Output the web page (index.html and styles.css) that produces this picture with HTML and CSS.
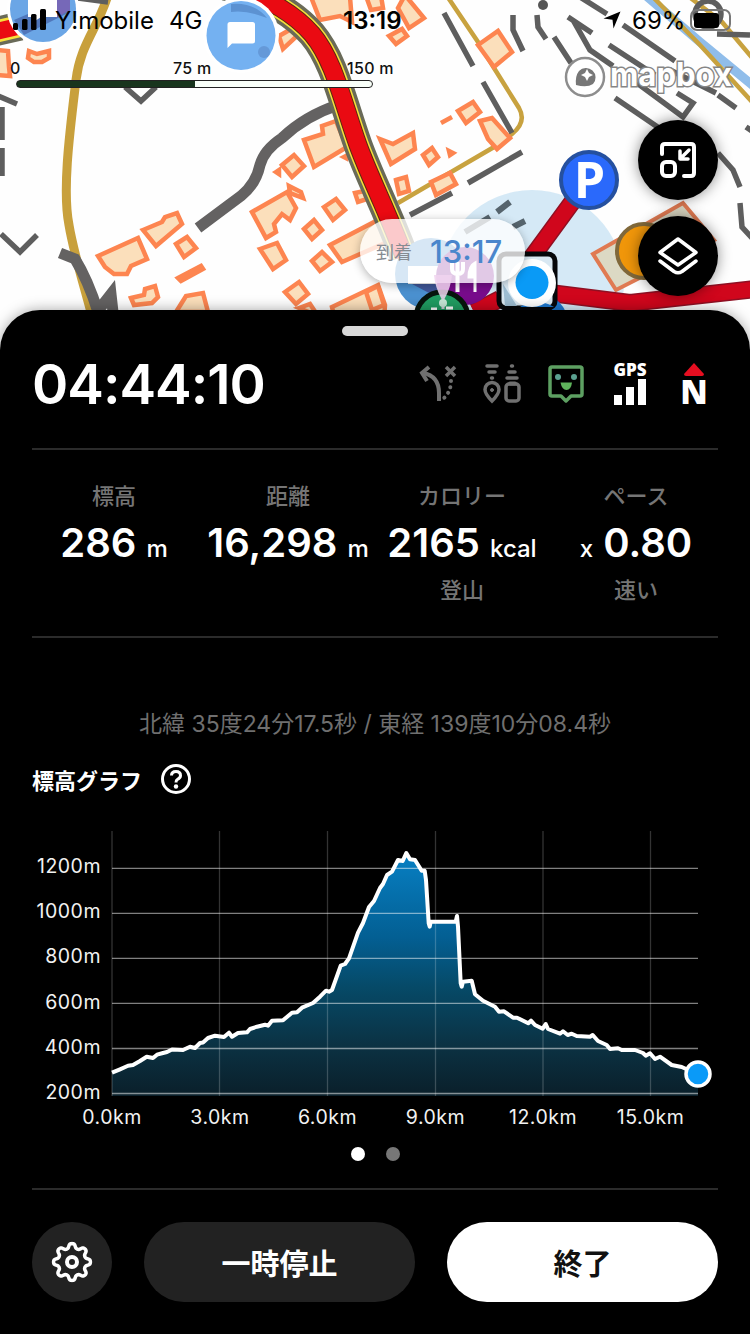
FILE: index.html
```html
<!DOCTYPE html>
<html lang="ja">
<head>
  <meta charset="UTF-8">
  <title>活動記録</title>
  <link rel="stylesheet" href="styles.css">
</head>
<body>
  <div class="screen">

    <!-- 地図 -->
    <section class="map">
      <svg class="map-canvas" viewBox="0 0 750 350" width="750" height="350">
        <!-- 水路と細い道 -->
        <path class="river" d="M644 -6 L700 42 L756 88"/>
        <g class="lane">
          <path d="M652 -4 L700 45 L754 104"/>
          <path d="M688 -4 L722 22 L754 60"/>
          <path d="M447 -4 L478 42 L494 68 L519 108 Q527 122 512 134 L494 147 L398 203"/>
        </g>
        <path class="road-olive" d="M108 -5 C98 28 80 45 76 80 C70 130 62 190 69 225 C74 255 84 285 93 320"/>
        <g class="road-gray">
          <path d="M338 105 Q305 116 282 138 Q264 150 260 165 Q256 184 241 196 L198 228"/>
          <path d="M60 253 L75 259 Q88 280 98 312 M97 312 L111 294 L113 312"/>
        </g>

        <!-- 擁壁・崖線 -->
        <g class="wall">
          <path d="M1 234 L20 252 L37 235"/>
          <path d="M125 87 L141 101 L156 87"/>
          <path d="M-2 96 L17 104"/>
          <path d="M2 107 V140 M2 148 V176"/>
          <path d="M78 -2 L108 2"/>
          <path d="M444 13 L473 66 M483 82 L512 133"/>
          <path d="M513 15 L513 30 L523 51 M537 15 L538 27 L546 39"/>
          <path d="M554 37 L571 63 M568 17 L592 33 M573 20 L590 50 L613 66"/>
          <path d="M580 -3 L607 14 M623 25 L675 61 M609 45 L655 75 M670 70 L716 93"/>
          <path d="M615 98 L662 130 M637 83 L683 117 L693 103 L677 93 M718 95 L736 108"/>
          <path d="M717 34 L750 35 M746 127 L752 131"/>
          <path d="M718 153 L733 170 L740 187 M740 203 L742 227 L752 238"/>
          <path d="M468 183 L522 152 M410 215 L452 193"/>
          <circle cx="708" cy="14" r="13"/>
        </g>
        <circle cx="543" cy="5" r="5" fill="#555"/>

        <!-- 建物 -->
        <g class="building">
          <path d="M405 -5 L424 18 L409 28 L398 8 Z"/>
          <path d="M389 36 L402 29 L407 36 L396 44 Z"/>
          <path d="M478 45 L498 31 L512 52 L494 67 Z"/>
          <path d="M311 -3 L320 20 L340 16 L352 22 L350 -3 Z"/>
          <path d="M366 -4 L371 10 L383 8 L381 -4 Z"/>
          <path d="M279 36 L293 28 L298 35 L283 49 Z"/>
          <path d="M29 51 L37 54 L49 51 L49 58 L42 62 L34 62 L28 58 Z"/>
          <path d="M-4 50 L8 51 L9 67 L10 76 L-4 75 Z"/>
          <path d="M304 140 L323 134 L322 126 L336 121 L347 147 L314 167 Z"/>
          <path d="M282 165 L294 155 L304 166 L292 177 Z"/>
          <path d="M252 212 L287 192 L296 208 L290 220 L282 214 L274 224 L276 232 L266 238 Z"/>
          <path d="M289 186 L301 192 L303 198 L290 193 Z"/>
          <path d="M324 207 L336 199 L345 210 L333 220 Z"/>
          <path d="M304 229 L314 220 L322 230 L312 239 Z"/>
          <path d="M355 193 L364 191 L367 199 L358 202 Z"/>
          <path d="M260 249 L277 243 L286 260 L273 269 Z"/>
          <path d="M330 245 L378 220 L392 240 L342 262 Z"/>
          <path d="M312 261 L322 252 L332 262 L320 271 Z"/>
          <path d="M285 292 L299 282 L308 294 L296 304 Z"/>
          <path d="M332 307 L378 285 L385 305 L384 320 L335 320 Z"/>
          <path d="M98 256 L138 238 L147 259 L131 266 L127 274 L114 274 L105 267 Z"/>
          <path d="M143 230 L162 222 L165 217 L177 213 L182 224 L156 246 Z"/>
          <path d="M176 244 L187 237 L196 248 L184 257 Z"/>
          <path d="M178 278 L201 266 L203 269 L181 281 Z"/>
          <path d="M131 298 L144 295 L145 289 L155 286 L158 297 L152 303 L134 305 Z"/>
          <path d="M176 312 L186 296 L203 293 L208 312 Z"/>
          <path d="M299 308 L310 304 L318 316 Z"/>
          <path d="M380 139 L393 144 L413 133 L415 149 L391 164 Z"/>
          <path d="M423 155 L432 148 L438 157 L429 165 Z"/>
          <path d="M458 111 L473 102 L480 112 L466 123 Z"/>
          <path d="M480 121 L492 118 L510 138 L497 149 L488 139 Z"/>
          <path d="M431 182 L450 173 L456 184 L436 195 Z"/>
          <path d="M396 180 L406 177 L409 191 L399 194 Z"/>
          <path d="M441 123 L452 117"/>
          <path d="M449 151 L453 153 L450 155 Z M276 172 L279 170 L279 174 Z M344 157 L346 156 L346 158 Z"/>
          <path d="M366 292 L378 286 L384 305 L372 310 Z"/>
        </g>

        <!-- 国道 -->
        <g class="highway">
          <path class="casing" d="M-6 32 L20 26 M225 -14 C270 -4 298 18 312 34 C334 60 342 100 358 145 C370 178 386 208 404 256"/>
          <path class="edge" d="M-6 32 L20 26 M225 -14 C270 -4 298 18 312 34 C334 60 342 100 358 145 C370 178 386 208 404 256"/>
          <path class="line" d="M225 -14 C270 -4 298 18 312 34 C334 60 342 100 358 145 C370 178 386 208 404 256"/>
          <path class="fill" d="M-6 32 L20 26 M225 -14 C270 -4 298 18 312 34 C334 60 342 100 358 145 C370 178 386 208 404 256"/>
        </g>

        <!-- 現在地の精度円 -->
        <circle cx="532" cy="282" r="92" fill="#c3dff2" opacity=".7"/>
        <path d="M497 212 L510 202 M465 232 L490 217 M513 227 L525 221" stroke="#56646d" stroke-width="6"/>

        <path d="M593 254 L683 203 L714 240 L616 290 Z" fill="#dcd9c4" stroke="#e07a52" stroke-width="4"/>

        <!-- ルート -->
        <g class="route">
          <path class="route-edge" d="M584 186 L524 268 M550 293 L630 303 L756 289 M474 312 L500 299"/>
          <path class="route-line" d="M584 186 L524 268 M550 293 L630 303 L756 289 M474 312 L500 299"/>
        </g>

        <!-- マーカー -->
        <circle cx="644" cy="251" r="27" fill="#f0960a" stroke="#80683a" stroke-width="4"/>
        <circle cx="589" cy="180" r="28" fill="#2a69fb" stroke="#25509f" stroke-width="4"/>
        <text class="parking" x="589.5" y="198" text-anchor="middle">P</text>

        <circle cx="43" cy="9" r="36" fill="#fff"/>
        <circle cx="43" cy="9" r="33" fill="#6ba6e6"/>
        <path d="M14 20 L70 -4 V12 L24 35 Z" fill="#5077bb"/>
        <path d="M56 -5 H70 V10 L56 18 Z" fill="#7668b8"/>
        <path d="M28 -4 H57 V17 H41 L32 23 V17 H28 Z" fill="#fff"/>

        <circle cx="241" cy="35" r="38" fill="#fff"/>
        <circle cx="241" cy="35.500" r="34.500" fill="#74b1f1"/>
        <path d="M231 4 Q254 2 267 18 Q248 10 231 12 Z" fill="#5c92d2"/>
        <circle cx="264" cy="52" r="6" fill="#6599d8"/>
        <path d="M229 22 H252.500 Q255 22 255 24.500 V41 Q255 43.500 252.500 43.500 H232 L227.500 48 V24.500 Q227.500 22 230 22 Z" fill="#fff"/>

        <circle cx="431" cy="274" r="36" fill="#4b91d0"/>
        <path d="M408 266 H440 V284 H408 Z" fill="#fff"/>
        <path d="M412 284 H450 V304 Z" fill="#405799"/>
        <circle cx="465" cy="276" r="29" fill="#780c8c"/>
        <path d="M452 262 V269 Q452 274 458 274 Q463 274 463 269 V262 M457.500 262 V292" fill="none" stroke="#fff" stroke-width="4"/>
        <path d="M475 292 V263 Q469 266 469 277 H475" fill="#fff" stroke="#fff" stroke-width="3"/>

        <circle cx="535" cy="326" r="34" fill="#1e78cf"/>
        <rect x="499" y="254" width="56" height="54" rx="7" fill="#d9e8f2" stroke="#05070a" stroke-width="5"/>
        <path d="M503 284 L517 306 H505 Z" fill="#9dbdd2"/>
        <path d="M520 307 Q535 296 554 307 Z" fill="#1e78cf"/>
        <circle cx="532" cy="283" r="24" fill="#fff"/>
        <circle cx="532" cy="282.500" r="16.500" fill="#0a9af6"/>

        <circle cx="442" cy="318" r="26" fill="#209c61" stroke="#07150d" stroke-width="5"/>
        <path d="M431 309 H437 M446 308 H453" stroke="#fff" stroke-width="3"/>
      </svg>

      <div class="status-bar">
        <svg width="34" height="22" viewBox="0 0 34 22">
          <rect x="0" y="14" width="5" height="7" rx="1.500"/>
          <rect x="9" y="10" width="5.500" height="11" rx="1.500"/>
          <rect x="18" y="5" width="5.500" height="16" rx="1.500"/>
          <rect x="27" y="0" width="6" height="21" rx="1.500"/>
        </svg>
        <span class="carrier">Y!mobile</span>
        <span class="network">4G</span>
        <span class="clock">13:19</span>
        <svg class="locate" width="18" height="18" viewBox="0 0 18 18">
          <path d="M17.500 0.500 L10.500 17.500 L9.500 8.800 L0.500 7.500 Z"/>
        </svg>
        <span class="percent">69%</span>
        <svg width="43" height="22" viewBox="0 0 43 22">
          <rect x="1" y="1" width="39" height="20" rx="6" fill="none" stroke="#777" stroke-width="2"/>
          <rect x="4" y="4" width="25" height="15" rx="3"/>
        </svg>
      </div>

      <div class="scale">
        <span class="scale-0">0</span>
        <span class="scale-75">75 m</span>
        <span class="scale-150">150 m</span>
        <div class="scale-bar"></div>
      </div>

      <svg class="mapbox" width="176" height="48" viewBox="0 0 176 48">
        <circle cx="23" cy="25" r="19" fill="#fff" fill-opacity=".9" stroke="#8d8d8d" stroke-width="2.500"/>
        <path d="M14 33 Q13 24 17 19 A9.500 9.500 0 0 1 31 32 Q25 36 14 33 Z" fill="#777"/>
        <path d="M25 17 L27 21 L31 23 L27 25 L25 29 L23 25 L19 23 L23 21 Z" fill="#fff"/>
        <text x="48" y="34" textLength="122" lengthAdjust="spacingAndGlyphs">mapbox</text>
      </svg>

      <div class="arrival">
        <span class="arrival-label">到着</span>
        <span class="arrival-time">13:17</span>
        <svg class="arrival-pin" width="18" height="40" viewBox="0 0 18 40">
          <path d="M0 0 Q1 12 7.500 24 V34 H10.500 V24 Q17 12 18 0 Z" fill="#f0d3ee" opacity=".85"/>
          <circle cx="9" cy="28" r="4" fill="#c5e6d6"/>
        </svg>
      </div>

      <div class="map-buttons">
        <button class="round-btn">
          <svg width="40" height="40" viewBox="0 0 40 40" fill="none" stroke="#fff" stroke-width="4" stroke-linecap="round" stroke-linejoin="round">
            <path d="M4 14 V7 Q4 4 7 4 H33 Q36 4 36 7 V33 Q36 36 33 36 H26"/>
            <rect x="4" y="22" width="13" height="14" rx="4"/>
            <path d="M31 10 L24 17 M22 11 V19 H30" stroke-width="3.500"/>
          </svg>
        </button>
        <button class="round-btn">
          <svg width="44" height="40" viewBox="0 0 44 40" fill="none" stroke="#fff" stroke-width="3.500" stroke-linecap="round" stroke-linejoin="round">
            <path d="M22 3 L40 16.500 L22 29 L4 16.500 Z"/>
            <path d="M4 25 L18 35.500 Q22 38 26 35.500 L40 25"/>
          </svg>
        </button>
      </div>
    </section>

    <!-- 活動パネル -->
    <section class="sheet">
      <div class="handle"></div>

      <header class="sheet-header">
        <span class="timer">04:44:10</span>
        <div class="indicators">
          <svg width="40" height="40" viewBox="0 0 40 40" fill="none" stroke="#707070" stroke-width="4">
            <path d="M21 37 V29 Q21 12 5 9"/>
            <path d="M11 3 L4 9 L9 17"/>
            <path d="M28 3 L37 12 M37 3 L28 12" stroke-width="3.500"/>
            <path d="M33 17 Q33 28 25 35" stroke-dasharray="0.1 6" stroke-linecap="round"/>
          </svg>
          <svg width="40" height="40" viewBox="0 0 40 40" fill="none" stroke="#707070" stroke-width="3.500" stroke-linecap="round">
            <path d="M5 2 H15 M7 8 H13 M9.500 14 H10.500 M29.500 2 H30.500 M27 8 H33 M25 14 H35"/>
            <path d="M10 37 Q3 30 3 25.500 A7 7 0 0 1 17 25.500 Q17 30 10 37 Z"/>
            <circle cx="10" cy="26" r="1.500" fill="#707070" stroke-width="1"/>
            <rect x="24" y="20" width="13" height="17" rx="3"/>
            <path d="M28 19.500 H33" stroke-width="4"/>
          </svg>
          <svg width="40" height="40" viewBox="0 0 40 40" fill="none" stroke="#5da062" stroke-width="3.500" stroke-linejoin="round">
            <path d="M6 3 H34 Q36 3 36 5 V30 Q36 32 34 32 H25 L20 37 L15 32 H6 Q4 32 4 30 V5 Q4 3 6 3 Z"/>
            <circle cx="12" cy="13" r="3" fill="#5aa090" stroke="none"/>
            <circle cx="28" cy="13" r="3" fill="#5aa090" stroke="none"/>
            <path d="M15 18.500 H26 Q25 26 20.500 26 Q16 26 14.500 18.500 Z" fill="#5fb45c" stroke="none"/>
          </svg>
          <div class="gps">
            <span>GPS</span>
            <svg width="32" height="26" viewBox="0 0 32 26" fill="#fff">
              <rect x="0" y="16" width="8" height="10"/>
              <rect x="12" y="8" width="8" height="18"/>
              <rect x="24" y="0" width="8" height="26"/>
            </svg>
          </div>
          <div class="north">
            <svg width="20" height="13" viewBox="0 0 20 13"><path d="M10 0 L20 11 Q20 13 18 13 H2 Q0 13 0 11 Z" fill="#e60e20"/></svg>
            <span>N</span>
          </div>
        </div>
      </header>

      <div class="stats">
        <div class="stat">
          <span class="stat-label">標高</span>
          <span class="stat-value">286 <small>m</small></span>
        </div>
        <div class="stat">
          <span class="stat-label">距離</span>
          <span class="stat-value">16,298 <small>m</small></span>
        </div>
        <div class="stat">
          <span class="stat-label">カロリー</span>
          <span class="stat-value">2165 <small>kcal</small></span>
          <span class="stat-label">登山</span>
        </div>
        <div class="stat">
          <span class="stat-label">ペース</span>
          <span class="stat-value"><small>x</small> 0.80</span>
          <span class="stat-label">速い</span>
        </div>
      </div>

      <p class="coords">北緯 35度24分17.5秒 / 東経 139度10分08.4秒</p>

      <div class="chart-title">
        <h2>標高グラフ</h2>
        <svg width="32" height="32" viewBox="0 0 32 32" fill="none" stroke="#fff" stroke-width="3">
          <circle cx="16" cy="16" r="13.500"/>
          <path d="M11.500 12.500 Q11.500 8.500 16 8.500 Q20.500 8.500 20.500 12.500 Q20.500 15 17.500 16.300 Q16 17 16 19.500"/>
          <circle cx="16" cy="23.500" r="2.200" fill="#fff" stroke="none"/>
        </svg>
      </div>

      <svg class="chart" viewBox="32 800 686 340" width="686" height="340">
        <defs>
          <linearGradient id="elevation" x1="0" y1="852" x2="0" y2="1096" gradientUnits="userSpaceOnUse">
            <stop offset="0" stop-color="#0780c4"/>
            <stop offset=".35" stop-color="#035f93"/>
            <stop offset=".55" stop-color="#064a68"/>
            <stop offset=".8" stop-color="#0b3142"/>
            <stop offset="1" stop-color="#0a1f2a"/>
          </linearGradient>
        </defs>
        <path id="area" fill="url(#elevation)"/>
        <g class="grid-v">
          <path d="M112 831 V1096 M219.500 831 V1096 M327.500 831 V1096 M435.500 831 V1096 M543 831 V1096 M650.500 831 V1096"/>
        </g>
        <g class="grid-h">
          <path d="M112 868.300 H698 M112 913.300 H698 M112 958.300 H698 M112 1003.300 H698 M112 1048.500 H698 M112 1093.500 H698"/>
        </g>
        <path id="line" class="elevation-line"/>
        <circle cx="698" cy="1074" r="12" fill="#0a9af8" stroke="#fff" stroke-width="3.500"/>
        <g class="axis-y">
          <text x="101" y="873">1200m</text>
          <text x="101" y="918">1000m</text>
          <text x="101" y="963">800m</text>
          <text x="101" y="1008.500">600m</text>
          <text x="101" y="1054">400m</text>
          <text x="101" y="1099">200m</text>
        </g>
        <g class="axis-x">
          <text x="112" y="1124">0.0km</text>
          <text x="220" y="1124">3.0km</text>
          <text x="327.500" y="1124">6.0km</text>
          <text x="435.500" y="1124">9.0km</text>
          <text x="543" y="1124">12.0km</text>
          <text x="650.500" y="1124">15.0km</text>
        </g>
      </svg>

      <div class="pager">
        <span class="dot active"></span>
        <span class="dot"></span>
      </div>

      <footer class="actions">
        <button class="settings">
          <svg width="44" height="44" viewBox="0 0 44 44" fill="none" stroke="#fff" stroke-width="3.500" stroke-linejoin="round">
            <path id="gear"/>
            <circle cx="22" cy="22" r="5" stroke-width="4"/>
          </svg>
        </button>
        <button class="pause">一時停止</button>
        <button class="finish">終了</button>
      </footer>
    </section>
  </div>

  <script src="chart.js"></script>
</body>
</html>
```

FILE: styles.css
```css
* { box-sizing: border-box; margin: 0; padding: 0; }

body {
  width: 750px;
  height: 1334px;
  overflow: hidden;
  background: #000;
  color: #fff;
  font-family: Inter, "Noto Sans CJK JP", sans-serif;
}

button {
  border: none;
  font-family: inherit;
  display: flex;
  align-items: center;
  justify-content: center;
}

svg {
  display: block;
  flex-shrink: 0;
}

.screen {
  width: 750px;
  height: 1334px;
}

/* 地図 */
.map {
  position: relative;
  height: 350px;
  margin-bottom: -40px;
  background: #fefefe;
  overflow: hidden;
}
.map-canvas {
  position: absolute;
  top: 0;
  left: 0;
}
.map-canvas path { stroke-linejoin: miter; }
.river { fill: none; stroke: #90bdea; stroke-width: 9; }
.lane { fill: none; stroke: #c8a23f; stroke-width: 4.5; }
.road-olive { fill: none; stroke: #c8a03c; stroke-width: 9; }
.road-gray { fill: none; stroke: #646262; stroke-width: 11; }
.wall { fill: none; stroke: #5e5e5e; stroke-width: 5.5; }
.building { fill: #fbdfbb; stroke: #fd8550; stroke-width: 4.5; }
.highway { fill: none; }
.casing { stroke: #696a58; stroke-width: 29; }
.edge { stroke: #f6e03c; stroke-width: 22; }
.line { stroke: #5c2a10; stroke-width: 19; }
.fill { stroke: #ea0a12; stroke-width: 17; }
.route { fill: none; }
.route-edge { stroke: #8f1023; stroke-width: 18; }
.route-line { stroke: #d0061c; stroke-width: 15; }
.parking {
  font: 700 50px "Open Sans", sans-serif;
  fill: #fff;
}

/* ステータスバー */
.status-bar {
  position: relative;
  height: 40px;
  padding-left: 13px;
  display: flex;
  align-items: center;
  color: #000;
  font-size: 24px;
}
.carrier { margin-left: 8px; width: 107px; }
.network { margin-left: 7px; width: 80px; }
.clock {
  margin-left: 94px;
  width: 64px;
  font-weight: 600;
}
.locate { margin-left: 196px; }
.percent { margin-left: 11px; width: 58px; }

/* 縮尺 */
.scale {
  position: relative;
  width: 400px;
  height: 49px;
  padding: 18px 0 0 10px;
  display: grid;
  grid-template-columns: 163px 174px 1fr;
  grid-template-rows: 20px 10px;
  row-gap: 2px;
  color: #111;
  font-size: 16px;
  font-weight: 500;
  letter-spacing: 0.3px;
  line-height: 20px;
}
.scale-bar {
  grid-column: 1 / 4;
  width: 357px;
  height: 8px;
  margin-left: 6px;
  border: 1px solid #222;
  border-radius: 4px;
  background: linear-gradient(to right, #18351d 50%, #f8fff8 50%);
}

.mapbox {
  position: absolute;
  left: 562px;
  top: 52px;
}
.mapbox text {
  font: 700 33px Inter, sans-serif;
  fill: #fff;
  stroke: #868686;
  stroke-width: 3px;
  paint-order: stroke;
}

/* 到着の吹き出し */
.arrival {
  position: absolute;
  left: 360px;
  top: 219px;
  width: 165px;
  height: 64px;
  padding-left: 16px;
  display: flex;
  align-items: center;
  border-radius: 32px;
  background: rgba(255, 255, 255, 0.78);
  box-shadow: 0 2px 10px rgba(0, 0, 0, 0.3);
}
.arrival-label {
  width: 54px;
  color: #858b92;
  font-size: 18px;
}
.arrival-time {
  color: #4a86cc;
  font-size: 31px;
  font-weight: 500;
}
.arrival-pin {
  position: absolute;
  left: 74px;
  top: 56px;
}

.map-buttons {
  position: absolute;
  right: 32px;
  top: 120px;
  display: flex;
  flex-direction: column;
  gap: 16px;
}
.round-btn {
  width: 80px;
  height: 80px;
  border-radius: 50%;
  background: #000;
  box-shadow: 0 0 14px rgba(0, 0, 0, 0.45);
}

/* 活動パネル */
.sheet {
  position: relative;
  height: 1024px;
  padding: 16px 32px 32px;
  border-radius: 40px 40px 0 0;
  background: #000;
  box-shadow: 0 0 14px rgba(0, 0, 0, 0.35);
}
.handle {
  width: 66px;
  height: 10px;
  margin: 0 auto;
  border-radius: 5px;
  background: #d8d8d8;
}
.sheet-header {
  height: 114px;
  padding-bottom: 16px;
  display: flex;
  align-items: center;
  justify-content: space-between;
  border-bottom: 2px solid #2b2b2b;
}
.timer {
  font-size: 55px;
  font-weight: 600;
  letter-spacing: -1px;
}
.indicators {
  display: flex;
  align-items: center;
  gap: 24px;
  margin-right: 4px;
}
.gps, .north {
  width: 40px;
  height: 42px;
  display: flex;
  flex-direction: column;
  align-items: center;
  justify-content: space-between;
}
.gps span {
  font: 800 17px/13px "Open Sans", sans-serif;
}
.north span {
  font: 800 33px/26px "Open Sans", sans-serif;
}

/* 数値 */
.stats {
  height: 188px;
  margin: 0;
  padding-top: 29px;
  display: grid;
  grid-template-columns: repeat(4, 174px);
  justify-content: center;
  border-bottom: 2px solid #2b2b2b;
}
.stat {
  display: flex;
  flex-direction: column;
  align-items: center;
}
.stat-label {
  height: 34px;
  color: #757575;
  font-size: 22px;
  font-weight: 500;
  line-height: 34px;
}
.stat-value {
  height: 60px;
  font-size: 40px;
  font-weight: 600;
  line-height: 60px;
  white-space: nowrap;
}
.stat-value small {
  font-size: 24px;
  font-weight: 500;
}

.coords {
  margin-top: 69px;
  height: 35px;
  color: #6f6f6f;
  font-size: 23px;
  line-height: 35px;
  text-align: center;
  white-space: nowrap;
}

.chart-title {
  height: 42px;
  margin-top: 16px;
  display: flex;
  align-items: center;
  gap: 18px;
}
.chart-title h2 {
  font-size: 22px;
  font-weight: 600;
}

/* 標高グラフ */
.grid-v { stroke: rgba(255, 255, 255, 0.2); stroke-width: 1.3; }
.grid-h { stroke: rgba(255, 255, 255, 0.5); stroke-width: 1.3; }
.elevation-line {
  fill: none;
  stroke: #fff;
  stroke-width: 4;
  stroke-linejoin: round;
}
.axis-x, .axis-y {
  fill: #f2f2f2;
  font-size: 19.5px;
  letter-spacing: 0.5px;
}
.axis-y { text-anchor: end; }
.axis-x { text-anchor: middle; }

.pager {
  height: 48px;
  padding-bottom: 20px;
  display: flex;
  align-items: center;
  justify-content: center;
  gap: 21px;
}
.dot {
  width: 14px;
  height: 14px;
  border-radius: 50%;
  background: #777;
}
.dot.active { background: #fff; }

/* 操作ボタン */
.actions {
  padding-top: 32px;
  display: grid;
  grid-template-columns: 80px 1fr 1fr;
  gap: 32px;
  border-top: 2px solid #2b2b2b;
}
.actions button {
  height: 80px;
  border-radius: 40px;
  background: #222;
  color: #fff;
  font-size: 29px;
  font-weight: 700;
}
.actions .finish {
  background: #fff;
  color: #111;
}
```

FILE: chart.js
```js
// 標高の折れ線
const points = [
  [112, 1072.7], [120, 1069.3], [128, 1065.7], [133, 1065], [140, 1061], [146.7, 1056.7],
  [153, 1058], [157, 1054.7], [163, 1053], [167, 1052], [172, 1049.5], [183, 1050],
  [190, 1046.7], [195, 1048], [200, 1043], [203, 1042.5], [208, 1038], [215, 1035.7],
  [224, 1037], [229, 1032.7], [232, 1036.7], [238, 1033], [247, 1032.3], [250, 1029],
  [257, 1026.7], [265, 1024.7], [268, 1025.7], [272, 1020.7], [283, 1020.3], [292, 1012.7],
  [297, 1012.3], [302, 1007.7], [313, 1003], [320, 996.7], [326, 990.7], [329, 991.7],
  [332, 990], [340.7, 965.7], [345, 964], [349, 958.3], [358, 932.7], [363, 923],
  [369, 907], [374, 901], [380, 888], [383, 884], [387, 875], [392, 871.7],
  [398, 860], [402.7, 861], [406.3, 853], [410, 859.3], [415, 860], [421.7, 870.7],
  [424.7, 870.7], [426, 880], [428.7, 923.3], [429.7, 926.7], [430.7, 921.7], [455.7, 921.7],
  [457, 916], [458, 926.7], [460.7, 983.3], [461.7, 986.7], [463, 981.7], [471.7, 980.7],
  [475, 994.3], [483, 1000.7], [495, 1006.7], [499, 1011.7], [504, 1011.3], [513, 1017.7],
  [517, 1017.7], [528.3, 1023.3], [531, 1020.7], [535, 1025], [542.7, 1028.7], [545.7, 1024],
  [548, 1029], [560, 1033.7], [563, 1031.3], [567.7, 1035], [571.7, 1033.7], [576.7, 1036],
  [590, 1036.7], [592.7, 1035], [598, 1041], [606.7, 1045], [610, 1049], [618, 1048.3],
  [621.7, 1050], [635, 1050], [643, 1053], [645.7, 1055.7], [650, 1053.3], [655, 1059],
  [660, 1056.7], [671.7, 1065], [681.7, 1067], [686.7, 1069.3], [698, 1074]
];

const line = 'M' + points.map(p => p.join(' ')).join(' L');
document.getElementById('line').setAttribute('d', line);
document.getElementById('area').setAttribute('d', line + ' V1096 H112 Z');

// 歯車の輪郭(歯は8枚)
let gear = '';
for (let i = 0; i <= 160; i++) {
  const a = i / 160 * Math.PI * 2;
  const wave = Math.cos(a * 8);
  const r = 16.2 + 2.4 * Math.tanh(wave * 1.6);
  gear += (i ? 'L' : 'M') + (22 + r * Math.cos(a)).toFixed(2) + ' ' + (22 + r * Math.sin(a)).toFixed(2);
}
document.getElementById('gear').setAttribute('d', gear + 'Z');
```
